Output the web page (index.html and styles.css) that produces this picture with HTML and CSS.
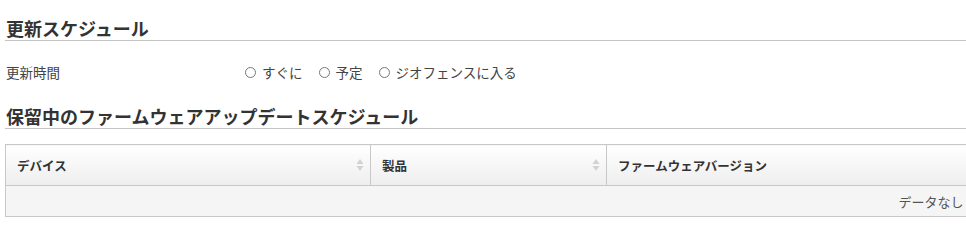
FILE: index.html
```html
<!DOCTYPE html>
<html lang="ja">
<head>
<meta charset="utf-8">
<link rel="stylesheet" href="styles.css">
</head>
<body>
<div class="page">
  <h1 class="section-title first">更新スケジュール</h1>
  <div class="form-row">
    <div class="form-label">更新時間</div>
    <div class="radio-group">
      <label class="radio"><span class="radio-dot"></span>すぐに</label>
      <label class="radio"><span class="radio-dot"></span>予定</label>
      <label class="radio"><span class="radio-dot"></span>ジオフェンスに入る</label>
    </div>
  </div>
  <h2 class="section-title">保留中のファームウェアアップデートスケジュール</h2>
  <div class="table-wrap">
    <table class="data-table">
      <thead>
        <tr>
          <th class="col-device sortable">デバイス<span class="sort-icon"><svg width="8" height="14" viewBox="0 0 8 14"><path d="M4 1 L7.5 6 L0.5 6 Z" fill="#d2d2d2"/><path d="M4 13 L7.5 8 L0.5 8 Z" fill="#d2d2d2"/></svg></span></th>
          <th class="col-product sortable">製品<span class="sort-icon"><svg width="8" height="14" viewBox="0 0 8 14"><path d="M4 1 L7.5 6 L0.5 6 Z" fill="#d2d2d2"/><path d="M4 13 L7.5 8 L0.5 8 Z" fill="#d2d2d2"/></svg></span></th>
          <th class="col-version">ファームウェアバージョン</th>
        </tr>
      </thead>
      <tbody>
        <tr>
          <td class="empty" colspan="3">データなし</td>
        </tr>
      </tbody>
    </table>
  </div>
</div>
</body>
</html>
```
FILE: styles.css
```css
html, body {
  margin: 0;
  padding: 0;
  background: #ffffff;
  overflow: hidden;
}
body {
  font-family: "Noto Sans CJK JP", "Noto Sans", sans-serif;
  color: #333333;
}
.page {
  padding-left: 5px;
}
.section-title {
  margin: 22px 0 0 0;
  font-size: 18px;
  line-height: 24px;
  font-weight: bold;
  color: #333333;
  border-bottom: 1px solid #c4c4c4;
  padding-left: 1px;
}
.section-title.first {
  margin-top: 16px;
}
.form-row {
  display: flex;
  align-items: center;
  margin-top: 21px;
  height: 20px;
  font-size: 13.5px;
  color: #444444;
}
.form-label {
  width: 240px;
  padding-left: 1px;
  box-sizing: border-box;
}
.radio-group {
  display: flex;
  gap: 16px;
}
.radio {
  display: flex;
  align-items: center;
  gap: 6px;
}
.radio-dot {
  width: 11px;
  height: 11px;
  border: 1px solid #777777;
  border-radius: 50%;
  box-sizing: border-box;
  display: inline-block;
}
.table-wrap {
  margin-top: 15px;
}
.data-table {
  width: 962px;
  border-collapse: collapse;
  table-layout: fixed;
  font-size: 12.5px;
}
.data-table th {
  height: 41px;
  padding: 0 0 0 11px;
  text-align: left;
  font-weight: bold;
  color: #333333;
  background: linear-gradient(#ffffff, #eeeeee);
  border: 1px solid #c8c8c8;
  box-sizing: border-box;
  position: relative;
}
.col-device { width: 365px; }
.col-product { width: 236px; }
.sort-icon {
  position: absolute;
  right: 6px;
  top: 50%;
  transform: translateY(-50%);
  display: flex;
}
.data-table td.empty {
  height: 30px;
  padding: 0 3px 0 0;
  text-align: right;
  font-size: 13px;
  color: #555555;
  background: #f5f5f5;
  border: 1px solid #c8c8c8;
  border-right: none;
}
```
